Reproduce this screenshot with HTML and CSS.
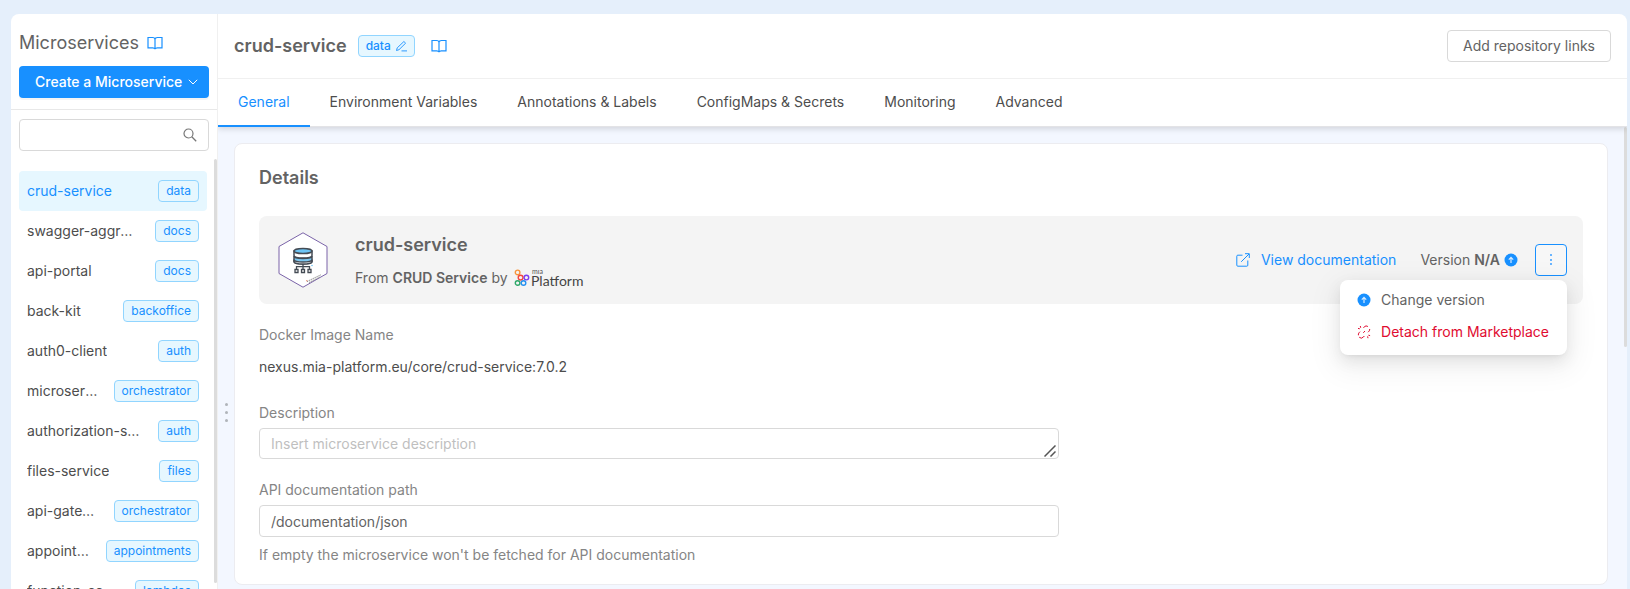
FILE: index.html
```html
<!DOCTYPE html>
<html lang="en">
<head>
<meta charset="utf-8">
<title>Microservices</title>
<link rel="stylesheet" href="styles.css">
</head>
<body>
<svg class="defs" width="0" height="0" aria-hidden="true">
  <symbol id="book" viewBox="0 0 16 16"><path d="M1 2.500h4.600c1.400 0 2.400.8 2.400 2v9.600c-.4-.9-1.100-1.300-2.200-1.300H1zM15 2.500h-4.600c-1.400 0-2.400.8-2.400 2v9.600c.4-.9 1.100-1.300 2.200-1.300H15z" fill="none" stroke="currentColor" stroke-width="1.200"/></symbol>
  <symbol id="up" viewBox="0 0 14 14"><circle cx="7" cy="7" r="6.500" fill="#1890ff"/><path d="M7 10V4.500M4.800 6.600L7 4.300l2.200 2.300" fill="none" stroke="#d5eaff" stroke-width="1.200"/></symbol>
</svg>
<div class="app">
  <aside class="sidebar">
    <div class="sidebar-head">
      <h2 class="sidebar-title">Microservices <a class="doc-link" href="#" aria-label="Microservices documentation"><svg width="16" height="16"><use href="#book"/></svg></a></h2>
      <button class="create" type="button">Create a Microservice
        <svg width="10" height="10" viewBox="0 0 10 10"><path d="M.8 2.800L5 7l4.200-4.200" fill="none" stroke="currentColor"/></svg>
      </button>
    </div>
    <div class="search">
      <input class="search-input" type="text" aria-label="Search microservices">
      <svg width="14" height="14" viewBox="0 0 14 14"><circle cx="5.500" cy="5.500" r="4.500" fill="none" stroke="#777" stroke-width="1.200"/><path d="M8.800 8.800l4.400 4.400" stroke="#777" stroke-width="1.300"/></svg>
    </div>
    <nav class="list">
      <a class="item item-active" href="#"><span class="item-name">crud-service</span><span class="tag">data</span></a>
      <a class="item" href="#"><span class="item-name">swagger-aggregator</span><span class="tag">docs</span></a>
      <a class="item" href="#"><span class="item-name">api-portal</span><span class="tag">docs</span></a>
      <a class="item" href="#"><span class="item-name">back-kit</span><span class="tag">backoffice</span></a>
      <a class="item" href="#"><span class="item-name">auth0-client</span><span class="tag">auth</span></a>
      <a class="item" href="#"><span class="item-name">microservice-gateway</span><span class="tag">orchestrator</span></a>
      <a class="item" href="#"><span class="item-name">authorization-service</span><span class="tag">auth</span></a>
      <a class="item" href="#"><span class="item-name">files-service</span><span class="tag">files</span></a>
      <a class="item" href="#"><span class="item-name">api-gateway</span><span class="tag">orchestrator</span></a>
      <a class="item" href="#"><span class="item-name">appointment-manager</span><span class="tag">appointments</span></a>
      <a class="item" href="#"><span class="item-name">function-service</span><span class="tag">lambdas</span></a>
      <span class="thumb"></span>
    </nav>
  </aside>
  <main class="main">
    <header class="header">
      <h1 class="name">crud-service</h1>
      <button class="tag tag-edit" type="button">data
        <svg width="12" height="12" viewBox="0 0 12 12"><path d="M1.500 10.500l.7-2.600 6.700-6.400 1.700 1.700-6.600 6.500zM6.500 10.900H12" fill="none" stroke="currentColor" stroke-width=".9"/></svg>
      </button>
      <a class="doc-link" href="#" aria-label="Service documentation"><svg width="16" height="16"><use href="#book"/></svg></a>
      <button class="repo" type="button">Add repository links</button>
    </header>
    <nav class="tabs">
      <a class="tab tab-active" href="#">General</a>
      <a class="tab" href="#">Environment Variables</a>
      <a class="tab" href="#">Annotations &amp; Labels</a>
      <a class="tab" href="#">ConfigMaps &amp; Secrets</a>
      <a class="tab" href="#">Monitoring</a>
      <a class="tab" href="#">Advanced</a>
    </nav>
    <div class="body">
      <div class="grip"><i></i><i></i><i></i></div>
      <section class="card">
        <h2 class="card-title">Details</h2>
        <div class="banner">
          <svg class="hex" width="50" height="56" viewBox="0 0 50 56">
            <path d="M25 .8l24 13.700v27L25 55.200 1 41.500v-27z" fill="#fff" stroke="#7a63a8"/>
            <g stroke="#444b54" stroke-width="1.500">
              <path d="M16 19v4.500c0 3.400 18 3.400 18 0V19z" fill="#fff"/>
              <path d="M16 24v5.500c0 3.400 18 3.400 18 0V24c0 3.400-18 3.400-18 0z" fill="#7cc8f2"/>
              <path d="M16 27.500v2c0 3.400 18 3.400 18 0v-2c0 3.400-18 3.400-18 0z" fill="#fff"/>
              <ellipse cx="25" cy="19" rx="9" ry="2.600" fill="#6cc4f5"/>
              <path d="M25 32v5M18.500 37.500v-2.800h13v2.800" fill="none" stroke-width="1.300"/>
              <path d="M17 37.500h3v3h-3zM23.500 37.500h3v3h-3zM30 37.500h3v3h-3z" fill="#fff" stroke-width="1.300"/>
            </g>
            <circle cx="34" cy="33.500" r=".8" fill="#6cc4f5"/>
            <path d="M28 48.500l2 1" stroke="#f08a6a"/>
            <path d="M29 49.500l14.500-7M31 50.500l11-5.500" stroke="#888" stroke-width="1" stroke-dasharray="1.500 .8"/>
          </svg>
          <div class="about">
            <h3 class="name">crud-service</h3>
            <p class="origin">From <b>CRUD Service</b> by
              <svg class="mia" width="70" height="18" viewBox="0 0 70 18" role="img" aria-label="mia Platform">
                <g fill="none" stroke-width="1.400">
                  <circle cx="3.600" cy="3.400" r="2.300" stroke="#f7943c"/>
                  <circle cx="6.600" cy="8.600" r="2.400" stroke="#f4463f"/>
                  <circle cx="12.400" cy="8.600" r="2.300" stroke="#7b3ff2"/>
                  <circle cx="3.600" cy="14" r="2.300" stroke="#2fa86a"/>
                  <circle cx="9.500" cy="14" r="2.300" stroke="#2490f0"/>
                </g>
                <text class="mia-small" x="18" y="5">mia</text>
                <text class="mia-big" x="17" y="17">Platform</text>
              </svg>
            </p>
          </div>
          <a class="view" href="#"><svg width="14" height="14" viewBox="0 0 14 14"><path d="M6.500 2.200H1.800q-1 0-1 1v9q0 1 1 1h9q1 0 1-1V7.500M9 .7h4.300V5M13 1L5.200 8.800" fill="none" stroke="currentColor"/></svg>View documentation</a>
          <span class="version">Version <b>N/A</b> <svg width="14" height="14"><use href="#up"/></svg></span>
          <div class="more">
            <button class="more-button" type="button" aria-label="More actions"><svg width="2" height="12" viewBox="0 0 2 12"><path d="M0 0h2v2H0zM0 5h2v2H0zM0 9h2v2H0z" fill="#69b5ff"/></svg></button>
            <div class="menu">
              <button class="menu-item" type="button"><svg width="14" height="14"><use href="#up"/></svg>Change version</button>
              <button class="menu-item menu-danger" type="button"><svg width="14" height="14" viewBox="0 0 14 14" fill="none" stroke="currentColor"><path d="M6.500 2.800l.8-1a2.800 2.800 0 0 1 3.600-.3M12.700 4a2.800 2.800 0 0 1-.7 2.200l-1 1M3 6.700l-.9 1a3 3 0 0 0-.7 2.600M2.200 12.200a2.900 2.900 0 0 0 4.200-.2l1-1M8 6L6.300 7.800M1 3.400l1.800.4M3.300 1l.4 1.800M10.600 11.400l.4 1.800M11.400 10.200l1.700.4"/></svg>Detach from Marketplace</button>
            </div>
          </div>
        </div>
        <div class="form">
          <div class="field image"><span class="label">Docker Image Name</span><span class="value">nexus.mia-platform.eu/core/crud-service:7.0.2</span></div>
          <div class="field"><label class="label" for="desc">Description</label>
            <div class="area"><textarea class="control textarea" id="desc" rows="1" placeholder="Insert microservice description"></textarea>
              <svg class="resize" width="12" height="12" viewBox="0 0 12 12"><path d="M.5 11.500l11-11M6.500 11.500l5-5" stroke="#555" stroke-width="1.500"/></svg></div></div>
          <div class="field"><label class="label" for="path">API documentation path</label>
            <input class="control" id="path" type="text" value="/documentation/json"><span class="help">If empty the microservice won't be fetched for API documentation</span></div>
        </div>
      </section>
      <span class="thumb thumb-main"></span>
    </div>
  </main>
</div>
</body>
</html>
```
FILE: styles.css
```css
* { box-sizing: border-box; }
body { margin: 0; background: #e5effb; color: #636363; font: 14px/22px Inter, "Open Sans", sans-serif; }
h1, h2, h3, p { margin: 0; }
a { color: inherit; text-decoration: none; }
button, input, textarea { font: inherit; color: inherit; }
button { cursor: pointer; }
b { font-weight: 600; }
svg { flex: none; }
.defs { position: absolute; }
.app { display: flex; height: 100vh; padding: 14px 3px 0 11px; overflow: hidden; }

.sidebar { display: flex; flex-direction: column; flex: none; width: 207px; background: #fff; border-right: 1px solid #f0f0f0; border-top-left-radius: 8px; }
.sidebar-head { padding: 15px 8px 11px; border-bottom: 1px solid #e8e8e8; }
.sidebar-title { display: flex; align-items: center; gap: 8px; height: 28px; margin-bottom: 9px; font-size: 18px; font-weight: 400; }
.doc-link { display: flex; color: #1890ff; }
.create { display: flex; align-items: center; justify-content: space-between; width: 100%; height: 32px; padding: 0 11px 0 16px; border: 0; border-radius: 4px; background: #1890ff; color: #fff; font-weight: 500; box-shadow: 0 2px 0 rgba(0, 0, 0, .04); }
.search { display: flex; align-items: center; height: 32px; margin: 9px 8px 8px; padding-right: 11px; border: 1px solid #d9d9d9; border-radius: 4px; }
.search-input { flex: 1; min-width: 0; border: 0; outline: 0; background: none; }
.list { position: relative; flex: 1; min-height: 0; padding: 12px 10px 0 8px; overflow: hidden; }
.item { display: flex; align-items: center; justify-content: space-between; gap: 16px; height: 40px; padding: 0 8px; border-radius: 4px; color: #4d4d4d; }
.item-active { background: #e6f7ff; color: #1890ff; }
.item-name { overflow: hidden; text-overflow: ellipsis; white-space: nowrap; }
.tag { flex: none; height: 22px; padding: 0 7px; border: 1px solid #91d5ff; border-radius: 4px; background: #e6f7ff; color: #1890ff; font-size: 12px; line-height: 20px; }
.thumb { position: absolute; top: 0; right: 0; bottom: 6px; width: 3px; border-radius: 2px; background: #dcdcdc; }

.main { display: flex; flex-direction: column; flex: 1; min-width: 0; background: #fff; border-top-right-radius: 8px; }
.header { display: flex; align-items: center; height: 65px; padding: 0 16px; border-bottom: 1px solid #f0f0f0; }
.name { font-size: 18px; font-weight: 600; line-height: 28px; }
.tag-edit { display: flex; align-items: center; gap: 4px; margin: 0 16px 0 11px; font-weight: 500; }
.repo { height: 32px; margin-left: auto; padding: 0 15px; border: 1px solid #d9d9d9; border-radius: 4px; background: #fff; }
.tabs { position: relative; z-index: 1; display: flex; height: 48px; background: #fff; border-bottom: 1px solid #e3e3e6; box-shadow: 0 2px 6px rgba(0, 0, 0, .14); clip-path: inset(0 0 -10px 0); }
.tab { height: 48px; padding: 0 20px; color: #4d4d4d; line-height: 46px; }
.tab-active { color: #1890ff; border-bottom: 2px solid #1890ff; }
.body { position: relative; display: flex; flex: 1; align-items: flex-start; min-height: 0; padding-right: 19px; background: #f3f7ff; }
.thumb-main { bottom: auto; height: 220px; }
.grip { display: flex; flex-direction: column; align-items: center; gap: 5px; flex: none; width: 16px; padding-top: 276px; }
.grip i { width: 3px; height: 3px; border-radius: 50%; background: #b0b4ba; }

.card { flex: 1; min-width: 0; margin-top: 16px; padding: 20px 24px 18px; background: #fff; border: 1px solid #ececf0; border-radius: 8px; }
.card-title { margin-bottom: 24px; font-size: 18px; font-weight: 600; line-height: 28px; }
.banner { display: flex; align-items: center; height: 88px; padding: 0 16px 0 19px; border-radius: 8px; background: #f4f4f4; }
.about { flex: 1; margin-left: 27px; }
.origin { display: flex; align-items: center; gap: 4px; margin-top: 8px; }
.mia { margin-left: 2px; }
.mia-small { fill: #555; font: 7px Lato, sans-serif; }
.mia-big { fill: #444; font: 14px Lato, sans-serif; }
.view { display: flex; align-items: center; gap: 11px; color: #1890ff; }
.version { display: flex; align-items: center; gap: 4px; margin: 0 17px 0 24px; }
.more { position: relative; }
.more-button { display: flex; align-items: center; justify-content: center; width: 32px; height: 32px; padding: 0; border: 1px solid #1890ff; border-radius: 4px; background: #f7f7f7; }
.menu { position: absolute; top: 36px; right: 0; z-index: 2; padding: 4px 0 7px; border-radius: 8px; background: #fff; box-shadow: 0 3px 6px -4px rgba(0, 0, 0, .12), 0 6px 16px rgba(0, 0, 0, .08), 0 9px 28px 8px rgba(0, 0, 0, .05); }
.menu-item { display: flex; align-items: center; gap: 10px; width: 100%; height: 32px; padding: 0 18px 0 17px; border: 0; background: none; white-space: nowrap; }
.menu-danger { color: #e00b30; }

.form { display: flex; flex-direction: column; max-width: 800px; margin-top: 20px; gap: 20px; }
.field { display: flex; flex-direction: column; }
.image { gap: 10px; margin-bottom: 4px; }
.label, .help { color: #858585; }
.value { color: #4d4d4d; }
.control { display: block; width: 100%; height: 32px; padding: 4px 11px; border: 1px solid #d9d9d9; border-radius: 4px; outline: 0; background: #fff; }
.textarea { height: 31px; resize: none; overflow: hidden; }
.control::placeholder { color: #bfbfbf; }
.label + .control, .area { margin-top: 4px; }
.area { position: relative; }
.resize { position: absolute; right: 3px; bottom: 2px; }
.help { margin-top: 7px; }
```
